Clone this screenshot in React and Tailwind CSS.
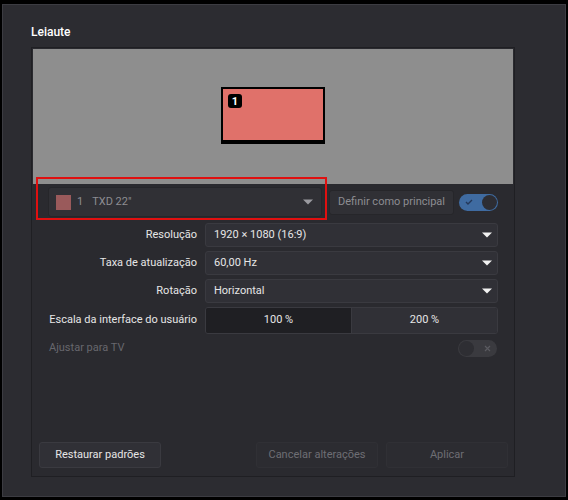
import { useState } from 'react';

function Caret({ className }) {
  return (
    <svg width="10" height="6" viewBox="0 0 10 6" className={className}>
      <path d="M0 0.5 L10 0.5 L5 5.5 Z" fill="currentColor" />
    </svg>
  );
}

function SelectBox({ value }) {
  return (
    <div className="flex h-[24px] w-[293px] items-center justify-between rounded-[3px] border border-[#3a3a40] bg-[#303036] pl-[8px] pr-[5px] text-[11px] text-[#e6e6e6]">
      <span>{value}</span>
      <Caret className="text-[#f2f2f2]" />
    </div>
  );
}

function App() {
  const [scale, setScale] = useState('100');

  const rows = [
    { label: 'Resolução', value: '1920 × 1080 (16:9)' },
    { label: 'Taxa de atualização', value: '60,00 Hz' },
    { label: 'Rotação', value: 'Horizontal' },
  ];

  return (
    <div className="h-[500px] w-[568px] bg-black pt-[4px] font-['Roboto','Noto_Sans',sans-serif]">
      <div className="ml-[2px] flex h-[493px] w-[564px] flex-col border border-[#3c3c42] bg-[#2c2c31] pl-[28px]">
        <div className="pt-[18px] pb-[6px] text-[12px] font-medium text-white">Leiaute</div>

        <div className="relative flex h-[430px] w-[484px] flex-col border border-[#1f1f23] bg-[#2a2a2f] p-[1px]">
          <div className="flex h-[135px] items-start justify-center bg-[#8e8e8e] pt-[38px]">
            <div className="h-[57px] w-[104px] border-2 border-b-[4px] border-black bg-[#e0716a] p-[5px]">
              <div className="flex h-[14px] w-[14px] items-center justify-center rounded-[3px] bg-black text-[11px] font-bold leading-none text-white">
                1
              </div>
            </div>
          </div>

          <div className="mt-[3px] flex items-center pl-[15px] text-[11px]">
            <div className="flex h-[30px] w-[274px] items-center justify-between rounded-[3px] border border-[#26262a] bg-[#303035] pl-[7px] pr-[8px] text-[#8d8d92]">
              <div className="flex items-center">
                <span className="mr-[6px] h-[15px] w-[15px] bg-[#9a5a5b]" />
                <span>1</span>
                <span className="ml-[9px]">TXD 22"</span>
              </div>
              <Caret className="text-[#9a9aa0]" />
            </div>
            <div className="ml-[7px] flex h-[25px] w-[125px] items-center justify-center whitespace-nowrap rounded-[3px] border border-[#26262a] bg-[#303035] text-[#8d8d92]">
              Definir como principal
            </div>
            <div className="ml-[5px] flex h-[17px] w-[39px] items-center justify-between rounded-full bg-[#3f6ba1] pl-[6px] pr-[1px]">
              <svg width="8" height="6" viewBox="0 0 8 6">
                <path d="M1 3 L3 5 L7 1" fill="none" stroke="#24385a" strokeWidth="1.4" />
              </svg>
              <span className="h-[15px] w-[15px] rounded-full bg-[#2d2d33]" />
            </div>
          </div>

          <div className="pointer-events-none absolute left-[4px] top-[129px] h-[43px] w-[291px] border-2 border-[#e01010]" />

          <div className="mt-[6px] flex flex-col gap-[4px] text-[11px]">
            {rows.map((row) => (
              <div key={row.label} className="flex items-center">
                <div className="w-[164px] whitespace-nowrap text-right text-[#e6e6e6]">{row.label}</div>
                <div className="ml-[8px]">
                  <SelectBox value={row.value} />
                </div>
              </div>
            ))}
            <div className="flex items-center">
              <div className="w-[164px] whitespace-nowrap text-right text-[#e6e6e6]">Escala da interface do usuário</div>
              <div className="ml-[8px] flex h-[27px] w-[293px] overflow-hidden rounded-[3px] border border-[#3a3a40] text-[#e6e6e6]">
                <button
                  onClick={() => setScale('100')}
                  className={`flex-1 border-r border-[#3a3a40] ${scale === '100' ? 'bg-[#1f1f23]' : 'bg-[#303036]'}`}
                >
                  100 %
                </button>
                <button
                  onClick={() => setScale('200')}
                  className={`flex-1 ${scale === '200' ? 'bg-[#1f1f23]' : 'bg-[#303036]'}`}
                >
                  200 %
                </button>
              </div>
            </div>
            <div className="mt-[2px] flex items-center justify-between pl-[16px] pr-[16px]">
              <span className="text-[#67676d]">Ajustar para TV</span>
              <div className="flex h-[17px] w-[39px] items-center justify-between rounded-full bg-[#3a3a3f] pl-[1px] pr-[6px]">
                <span className="h-[15px] w-[15px] rounded-full bg-[#2e2e33]" />
                <svg width="7" height="7" viewBox="0 0 7 7">
                  <path d="M1 1 L6 6 M6 1 L1 6" stroke="#5a5a60" strokeWidth="1.2" />
                </svg>
              </div>
            </div>
          </div>

          <div className="mt-auto flex items-center pb-[7px] pl-[6px] pr-[5px] text-[11px]">
            <div className="flex h-[26px] w-[122px] items-center justify-center rounded-[3px] border border-[#3a3a40] bg-[#303036] text-[#e6e6e6]">
              Restaurar padrões
            </div>
            <div className="ml-auto flex h-[26px] w-[122px] items-center justify-center rounded-[3px] border border-[#303035] bg-[#2c2c31] text-[#6e6e74]">
              Cancelar alterações
            </div>
            <div className="ml-[8px] flex h-[26px] w-[122px] items-center justify-center rounded-[3px] border border-[#303035] bg-[#2c2c31] text-[#6e6e74]">
              Aplicar
            </div>
          </div>
        </div>
      </div>
    </div>
  );
}

export default App;
